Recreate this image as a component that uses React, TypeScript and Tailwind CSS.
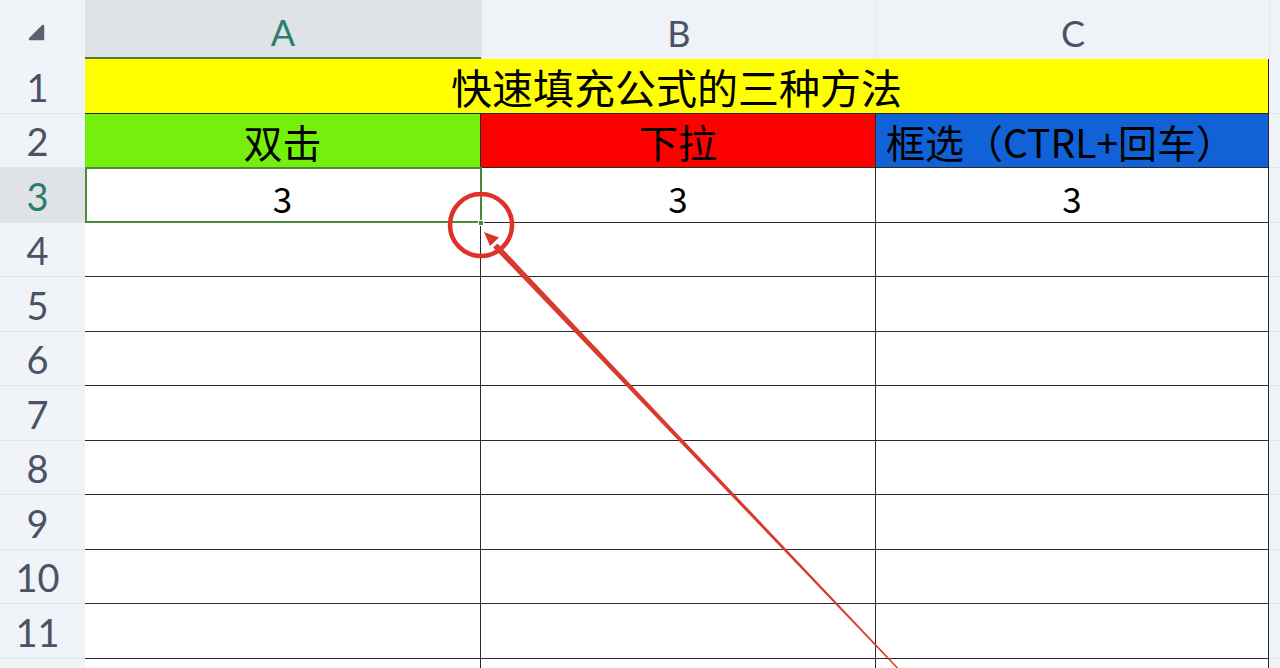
import React from "react";

const CJK = "font-['Noto_Sans_CJK_SC','Noto_Sans',sans-serif]";
const HDR = "font-['Lato','Open_Sans',sans-serif]";

const rows = [1, 2, 3, 4, 5, 6, 7, 8, 9, 10, 11, 12];

function RowHeader({ n }: { n: number }) {
  const sel = n === 3;
  return (
    <div
      className={
        sel
          ? `w-[85px] shrink-0 flex items-center justify-center pr-[10px] pt-[3px] border-b border-[#e3e6ea] text-[38px] bg-[#dfe2e6] text-[#2a7f6c] ${HDR}`
          : `w-[85px] shrink-0 flex items-center justify-center pr-[10px] pt-[3px] border-b border-[#e3e6ea] text-[38px] bg-[#f0f3f7] text-[#4a5264] ${HDR}`
      }
    >
      {n <= 11 ? n : ""}
    </div>
  );
}

const cellBase = "shrink-0 flex items-center border-r border-b border-[#2a2a2a] text-black";

export default function App() {
  return (
    <div className="relative w-[1280px] h-[668px] overflow-hidden bg-[#f0f3f7]">
      {/* header row */}
      <div className={`flex h-[59px] text-[36px] ${HDR}`}>
        <div className="w-[85px] shrink-0 flex items-center justify-center pr-[12px] pt-[6px] bg-[#f0f3f7]">
          <svg width="18" height="18" viewBox="0 0 18 18">
            <path d="M15 2 L15 15 L2 15 Z" fill="#5a6272" stroke="#5a6272" strokeWidth="2.5" strokeLinejoin="round" />
          </svg>
        </div>
        <div className="w-[396px] shrink-0 flex items-center justify-center pt-[7px] bg-[#dfe2e6] border-b-2 border-[#4b7d36] text-[#2a7f6c]">
          A
        </div>
        <div className="w-[395px] shrink-0 flex items-center justify-center pt-[7px] bg-[#eff2f6] border-l border-[#e4e7eb] text-[#4a5264]">
          B
        </div>
        <div className="w-[393px] shrink-0 flex items-center justify-center pt-[7px] bg-[#eff2f6] border-l border-[#e4e7eb] text-[#4a5264]">
          C
        </div>
        <div className="flex-1 bg-[#eff2f6] border-l border-[#e4e7eb]" />
      </div>

      {/* body rows */}
      {rows.map((n) => (
        <div key={n} className="flex h-[54.5px]">
          <RowHeader n={n} />
          {n === 1 ? (
            <div className={`${cellBase} w-[1184px] justify-center pt-[2px] bg-[#ffff00] text-[41px] ${CJK}`}>
              快速填充公式的三种方法
            </div>
          ) : n === 2 ? (
            <>
              <div className={`${cellBase} w-[396px] justify-center pt-[2px] bg-[#74f00c] text-[39px] ${CJK}`}>双击</div>
              <div className={`${cellBase} w-[395px] justify-center pt-[2px] bg-[#ff0000] text-[39px] ${CJK}`}>下拉</div>
              <div
                className={`${cellBase} w-[393px] justify-start pl-[10px] pt-[2px] bg-[#1162d6] text-[39px] text-[#08132e] whitespace-nowrap ${CJK}`}
              >
                框选（CTRL+回车）
              </div>
            </>
          ) : (
            <>
              <div className={`${cellBase} w-[396px] justify-center pt-[6px] bg-white text-[35px] ${CJK}`}>{n === 3 ? "3" : ""}</div>
              <div className={`${cellBase} w-[395px] justify-center pt-[6px] bg-white text-[35px] ${CJK}`}>{n === 3 ? "3" : ""}</div>
              <div className={`${cellBase} w-[393px] justify-center pt-[6px] bg-white text-[35px] ${CJK}`}>{n === 3 ? "3" : ""}</div>
            </>
          )}
          <div className="flex-1 border-b border-[#e3e6ea]" />
        </div>
      ))}

      {/* selection on A3 */}
      <div className="absolute left-[85px] top-[167px] w-[397px] h-[56px] border-2 border-[#4b8a3a] pointer-events-none" />
      <div className="absolute left-[478px] top-[220px] w-[6px] h-[6px] bg-[#4b8a3a] border border-white" />

      {/* annotation */}
      <svg className="absolute left-0 top-0 pointer-events-none" width="1280" height="668" viewBox="0 0 1280 668">
        <circle cx="481" cy="225" r="31" fill="none" stroke="#e0302a" strokeWidth="4.5" />
        <polygon points="497.5,243.4 493.2,247.4 900.5,672.2 901.5,671.2" fill="#d83a2e" />
        <polygon points="484,232 499,237.5 490,246" fill="#d8342a" />
      </svg>
    </div>
  );
}
